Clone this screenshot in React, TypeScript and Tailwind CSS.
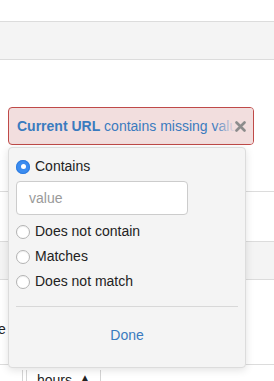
import React from "react";

const font = { fontFamily: '"Liberation Sans", Arial, sans-serif' };

function Radio({ checked }: { checked?: boolean }) {
  return checked ? (
    <span className="flex h-[14px] w-[14px] items-center justify-center rounded-full bg-[#3b8cf0] shadow-[inset_0_0_0_1px_#2f7de0]">
      <span className="h-[5px] w-[5px] rounded-full bg-white" />
    </span>
  ) : (
    <span className="h-[14px] w-[14px] rounded-full border border-[#b3b3b3] bg-white shadow-[inset_0_1px_1px_rgba(0,0,0,0.06)]" />
  );
}

function Option({ label, checked }: { label: string; checked?: boolean }) {
  return (
    <label className="flex h-[25px] items-center gap-[5px] text-[14px] text-[#222]">
      <Radio checked={checked} />
      <span>{label}</span>
    </label>
  );
}

export default function App() {
  return (
    <div className="relative h-[381px] w-[274px] overflow-hidden bg-white" style={font}>
      {/* page behind */}
      <div className="h-[21px]" />
      <div className="h-[39px] border-y border-[#dcdcdc] bg-[#f4f4f4]" />
      <div className="h-[47px]" />

      <div className="px-2">
        <div className="relative flex h-[38px] w-[246px] items-center overflow-hidden rounded-[4px] border border-[#bf4a48] bg-[#f2dede] pl-2">
          <span className="whitespace-nowrap text-[14px] text-[#3a7bbf]">
            <b>Current URL</b> contains missing value
          </span>
          <span className="absolute right-[17px] top-0 h-full w-[22px] bg-gradient-to-r from-[#f2dede00] to-[#f2dede]" />
          <span className="absolute right-0 top-0 flex h-full w-[17px] items-center bg-[#f2dede]">
            <svg width="11" height="11" viewBox="0 0 11 11" className="-ml-[1px]">
              <path d="M1.5 1.5 L9.5 9.5 M9.5 1.5 L1.5 9.5" stroke="#8c8c8c" strokeWidth="2.6" strokeLinecap="round" />
            </svg>
          </span>
        </div>
      </div>

      <div className="h-[47px] border-b border-[#dcdcdc]" />
      <div className="h-[50px] border-b border-[#dcdcdc]" />
      <div className="h-[38px] border-b border-[#dcdcdc] bg-[#f4f4f4]" />
      <div className="flex h-[85px] items-center border-b border-[#dcdcdc] pt-[14px]">
        <span className="-ml-[2px] text-[14px] text-[#222]">e</span>
      </div>
      <div className="flex h-[20px] pl-[22px] pt-[5px]">
        <div className="h-[20px] w-[5px] border-x border-[#d4d4d4]" />
        <div className="flex h-[20px] w-[74px] items-start justify-between border-r border-[#d4d4d4] px-[10px] pt-[3px] text-[14px] leading-none text-[#222]">
          <span>hours</span>
          <span className="text-[10px]">▲</span>
        </div>
      </div>

      {/* popover */}
      <div className="absolute left-[8px] top-[147px] flex h-[221px] w-[238px] flex-col rounded-[4px] border border-[#dcdcdc] bg-[#f4f4f4] px-[7px] pt-[6px] shadow-[0_2px_8px_rgba(0,0,0,0.12)]">
        <Option label="Contains" checked />
        <div className="mb-[4px] mt-[2px] flex h-[34px] w-[172px] items-center rounded-[4px] border border-[#cccccc] bg-white pl-[12px] text-[14px] text-[#9a9a9a]">
          value
        </div>
        <Option label="Does not contain" />
        <Option label="Matches" />
        <Option label="Does not match" />
        <div className="mt-[12px] border-t border-[#d8d8d8]" />
        <button className="mt-[18px] self-center text-[14px] text-[#3a7bbf]">Done</button>
      </div>
    </div>
  );
}
